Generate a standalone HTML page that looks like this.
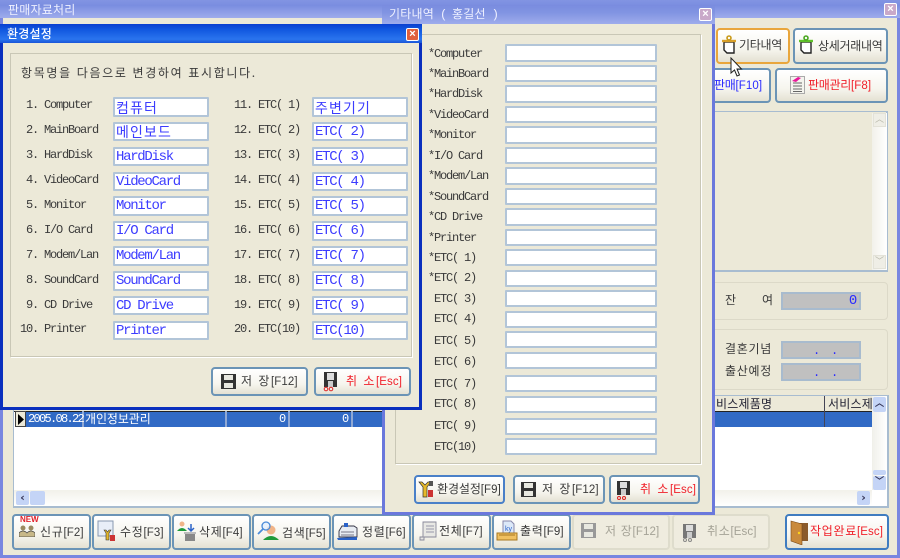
<!DOCTYPE html>
<html lang="ko"><head><meta charset="utf-8"><title>판매자료처리</title>
<style>
html,body{margin:0;padding:0;width:900px;height:558px;overflow:hidden;background:#ece9d8}
#r{position:relative;width:900px;height:558px;overflow:hidden;background:#ece9d8;filter:blur(.35px)}
#r div,#r span,#r svg{position:absolute}
#r i,#r b,#r span span{position:static}
.t{white-space:pre;font:12px/14px "Liberation Mono","DejaVu Sans Mono",monospace;letter-spacing:-1.2px;color:#3a3a3a}
i{font:normal 12px/14px "Noto Sans CJK KR","NanumGothic",sans-serif;letter-spacing:.7px}
b{font:normal 11.5px/14px "Liberation Sans",sans-serif;letter-spacing:.1px}
.b{color:#3c3cff;font-size:14px;letter-spacing:-1.3px}
.b i{font-size:14px;letter-spacing:1.1px}
.f{background:#fff;border:2px solid #b2c5d8;box-sizing:border-box;border-radius:1px}
.g{border:1px solid #c9c7b6;box-shadow:1px 1px 0 #fff;box-sizing:border-box}
.btn{box-sizing:border-box;border:2px solid #6b94b6;border-radius:4px;background:linear-gradient(#fff,#f6f5ee 60%,#e4e1d3)}
.dis{box-sizing:border-box;border:2px solid #dedccc;border-radius:4px;background:#efecdf}
.x{width:13px;height:13px;box-sizing:border-box;border:1px solid #fff;border-radius:2px;color:#fff;font:bold 11px/11px "Liberation Sans",sans-serif;text-align:center}
.w{color:#eef0ff}
.w i{letter-spacing:.2px}
.s{background:#c0c0c0;border:2px solid #a8bbce;box-sizing:border-box;color:#2a2aff}
.k i{letter-spacing:-.3px}
</style></head><body><div id="r">

<!-- main window -->
<div style="left:0;top:0;width:900px;height:558px;box-sizing:border-box;border:3px solid #7886e0;border-top:0"></div>
<div style="left:0;top:0;width:900px;height:18px;background:linear-gradient(#8294e2,#7a8de0 30%,#9eacec)"></div>
<span class="t w" style="left:8px;top:3px"><i>판매자료처리</i></span>
<div class="x" style="left:884px;top:3px;background:#c9a9c9">×</div>

<!-- right buttons -->
<div class="btn" style="left:716px;top:28px;width:74px;height:36px;border-color:#e9a63c"></div>
<svg style="left:721px;top:35px" width="16" height="20" viewBox="0 0 16 20"><path d="M3 7h10v11H6l-3-3z" fill="#fff" stroke="#222" stroke-width="1.4"/><path d="M1 6h14" stroke="#d9a02a" stroke-width="2.4"/><circle cx="8" cy="3" r="2" fill="none" stroke="#c99a1a" stroke-width="1.6"/></svg>
<span class="t k" style="left:739px;top:38px"><i>기타내역</i></span>
<div class="btn" style="left:793px;top:28px;width:95px;height:36px"></div>
<svg style="left:798px;top:35px" width="16" height="20" viewBox="0 0 16 20"><path d="M3 7h10v11H6l-3-3z" fill="#fff" stroke="#222" stroke-width="1.4"/><path d="M1 6h14" stroke="#5fc22a" stroke-width="2.4"/><circle cx="8" cy="3" r="2" fill="none" stroke="#4aa820" stroke-width="1.6"/></svg>
<span class="t k" style="left:818px;top:39px"><i>상세거래내역</i></span>
<div class="btn" style="left:680px;top:68px;width:91px;height:35px"></div>
<span class="t k" style="left:714px;top:78px;color:#2a2aff"><i>판매</i><b>[F10]</b></span>
<div class="btn" style="left:775px;top:68px;width:113px;height:35px"></div>
<svg style="left:790px;top:76px" width="15" height="18" viewBox="0 0 15 18"><rect x=".5" y=".5" width="14" height="17" fill="#f4f4ee" stroke="#aaa"/><path d="M3 7h9M3 10h9M3 13h9M3 15.500h9" stroke="#666"/><path d="M2 5l6-4 3 1-5 4z" fill="#e8189a"/></svg>
<span class="t k" style="left:808px;top:78px;color:#f0202a"><i>판매관리</i><b>[F8]</b></span>

<!-- right panels -->
<div class="g" style="left:700px;top:111px;width:188px;height:161px;border-color:#a8bcd0;border-width:1px 2px 2px 1px;box-shadow:none"></div>
<div style="left:872px;top:113px;width:15px;height:157px;background:linear-gradient(90deg,#f2f1ea,#fff)"></div>
<div style="left:873px;top:113px;width:13px;height:14px;background:#efeee6;border:1px solid #e3e2d8;box-sizing:border-box;color:#b8b8aa;font:9px/12px 'DejaVu Sans';text-align:center">︿</div>
<div style="left:873px;top:255px;width:13px;height:14px;background:#efeee6;border:1px solid #e3e2d8;box-sizing:border-box;color:#b8b8aa;font:9px/12px 'DejaVu Sans';text-align:center">﹀</div>
<div class="g" style="left:700px;top:282px;width:188px;height:38px;border-radius:4px;border-color:#dcd9c8;box-shadow:none"></div>
<div class="g" style="left:700px;top:329px;width:188px;height:61px;border-radius:4px;border-color:#dcd9c8;box-shadow:none"></div>
<span class="t" style="left:725px;top:293px"><i>잔</i></span><span class="t" style="left:762px;top:293px"><i>여</i></span>
<div class="s" style="left:781px;top:292px;width:80px;height:18px"><span class="t b" style="right:3px;top:0;color:#2a2aff">0</span></div>
<span class="t" style="left:725px;top:342px"><i>결혼기념</i></span>
<span class="t" style="left:725px;top:364px"><i>출산예정</i></span>
<div class="s" style="left:781px;top:341px;width:80px;height:18px"><span class="t" style="left:30px;top:1px;color:#2a2aff">.  .</span></div>
<div class="s" style="left:781px;top:363px;width:80px;height:18px"><span class="t" style="left:30px;top:1px;color:#2a2aff">.  .</span></div>

<!-- grid -->
<div style="left:13px;top:395px;width:876px;height:113px;box-sizing:border-box;background:#fff;border:1px solid #a8bcd0;border-width:1px 2px 2px 1px"></div>
<div style="left:14px;top:396px;width:858px;height:15px;background:#ece9d8;border-bottom:1px solid #222"></div>
<div style="left:15px;top:412px;width:857px;height:15px;background:#316ac5"></div>
<div style="left:15px;top:411px;width:11px;height:16px;background:#ece9d8;border:1px solid #444;box-sizing:border-box"></div>
<svg style="left:17px;top:414px" width="8" height="11"><path d="M1 0l6 5.500-6 5.500z" fill="#000"/></svg>
<div style="left:82px;top:411px;width:2px;height:16px;background:#8fa8d4"></div>
<div style="left:225px;top:411px;width:2px;height:16px;background:#8fa8d4"></div>
<div style="left:288px;top:411px;width:2px;height:16px;background:#8fa8d4"></div>
<div style="left:351px;top:411px;width:2px;height:16px;background:#8fa8d4"></div>
<div style="left:824px;top:396px;width:1px;height:31px;background:#445"></div>
<span class="t" style="left:28px;top:412px;color:#fff;letter-spacing:-1.7px">2005.08.22</span>
<span class="t" style="left:85px;top:412px;color:#fff"><i style="letter-spacing:-.1px">개인정보관리</i></span>
<span class="t" style="left:279px;top:412px;color:#fff">0</span>
<span class="t" style="left:342px;top:412px;color:#fff">0</span>
<span class="t" style="left:716px;top:397px;color:#223"><i style="letter-spacing:.2px">비스제품명</i></span>
<span class="t" style="left:828px;top:397px;color:#223"><i style="letter-spacing:.2px">서비스제</i></span>
<div style="left:872px;top:396px;width:15px;height:94px;background:linear-gradient(90deg,#f0f0ea,#fff)"></div>
<div style="left:873px;top:397px;width:13px;height:15px;background:#c4d4f6;border-radius:2px;color:#335;font:bold 9px/14px 'DejaVu Sans';text-align:center">︿</div>
<div style="left:873px;top:470px;width:13px;height:5px;background:#c4d4f6;border-radius:2px"></div>
<div style="left:873px;top:476px;width:13px;height:14px;background:#c4d4f6;border-radius:2px;color:#335;font:bold 9px/12px 'DejaVu Sans';text-align:center">﹀</div>
<div style="left:14px;top:490px;width:858px;height:16px;background:linear-gradient(#f2f1ea,#fff)"></div>
<div style="left:16px;top:491px;width:13px;height:14px;background:#c4d4f6;border-radius:2px;color:#335;font:bold 11px/13px 'DejaVu Sans';text-align:center">‹</div>
<div style="left:30px;top:491px;width:15px;height:14px;background:#c4d4f6;border-radius:2px"></div>
<div style="left:857px;top:491px;width:13px;height:14px;background:#c4d4f6;border-radius:2px;color:#335;font:bold 11px/13px 'DejaVu Sans';text-align:center">›</div>

<!-- bottom buttons -->
<div class="btn" style="left:12px;top:514px;width:79px;height:36px"></div>
<span class="t" style="left:20px;top:515px;color:#e0202a;font:bold 8px/10px 'Liberation Sans',sans-serif;letter-spacing:0">NEW</span>
<svg style="left:19px;top:525px" width="16" height="12"><circle cx="4" cy="3" r="2.500" fill="#9a8a60"/><circle cx="12" cy="3" r="2.500" fill="#9a8a60"/><path d="M0 12V8q4-4 8 0 4-4 8 0v4z" fill="#c8b888" stroke="#444" stroke-width=".7"/></svg>
<span class="t" style="left:40px;top:525px"><i>신규</i><b>[F2]</b></span>
<div class="btn" style="left:92px;top:514px;width:79px;height:36px"></div>
<svg style="left:97px;top:520px" width="20" height="22"><rect x="1" y="1" width="15" height="15" fill="#e8eef8" stroke="#8898b0"/><path d="M7 10l2 3v7h3v-7l2-3-2 0-1.500 2-1.500-2z" fill="#e6b92a" stroke="#333" stroke-width=".6"/><rect x="13" y="15" width="5" height="6" fill="#c33" /></svg>
<span class="t" style="left:120px;top:525px"><i>수정</i><b>[F3]</b></span>
<div class="btn" style="left:172px;top:514px;width:79px;height:36px"></div>
<svg style="left:177px;top:521px" width="20" height="20"><circle cx="5" cy="3" r="2.500" fill="#f0b488"/><path d="M0 10q5-6 10 0z" fill="#1f9a3a"/><path d="M14 3v6m-3-2l3 3 3-3" stroke="#2a62c8" stroke-width="1.500" fill="none"/><rect x="8" y="13" width="10" height="7" fill="#888"/><rect x="7" y="11" width="12" height="2" fill="#bbb"/></svg>
<span class="t" style="left:199px;top:525px"><i>삭제</i><b>[F4]</b></span>
<div class="btn" style="left:252px;top:514px;width:79px;height:36px"></div>
<svg style="left:257px;top:521px" width="22" height="20"><circle cx="14" cy="9" r="4.500" fill="#f0b488"/><path d="M6 19q8-8 16 0z" fill="#1f9a3a"/><circle cx="9" cy="5" r="4" fill="#dfeeff" fill-opacity=".7" stroke="#4a8ad8" stroke-width="1.300"/><path d="M6 8l-5 5" stroke="#4a8ad8" stroke-width="1.800"/></svg>
<span class="t" style="left:282px;top:526px"><i>검색</i><b>[F5]</b></span>
<div class="btn" style="left:332px;top:514px;width:79px;height:36px"></div>
<svg style="left:337px;top:523px" width="21" height="18"><path d="M5 3h12l3 2v9H2V8z" fill="#e8ecf2" stroke="#334" stroke-width=".9"/><rect x="7" y="0" width="4" height="4" fill="#2a62c8"/><path d="M4 9h13M4 12h13" stroke="#778"/><path d="M0 15l20-1v3H1z" fill="#2a62c8"/></svg>
<span class="t" style="left:362px;top:525px"><i>정렬</i><b>[F6]</b></span>
<div class="btn" style="left:412px;top:514px;width:79px;height:36px"></div>
<svg style="left:419px;top:521px" width="18" height="20"><path d="M4 1h13v15H5v3H1v-3h3z" fill="#e8e8e4" stroke="#889" stroke-width=".9"/><path d="M7 5h8M7 8h8M7 11h8" stroke="#99a"/></svg>
<span class="t" style="left:439px;top:524px"><i>전체</i><b>[F7]</b></span>
<div class="btn" style="left:492px;top:514px;width:79px;height:36px"></div>
<svg style="left:496px;top:520px" width="22" height="22"><path d="M7 1h8l3 3v10H7z" fill="#dce8f8" stroke="#88a"/><text x="9" y="11" font-size="7" font-family="Liberation Sans" fill="#2a62c8">ky</text><path d="M1 13h20v7H1z" fill="#f0c060" stroke="#a87820"/><path d="M3 15h16" stroke="#a87820"/></svg>
<span class="t" style="left:520px;top:524px"><i>출력</i><b>[F9]</b></span>
<div class="dis" style="left:572px;top:514px;width:98px;height:36px"></div>
<svg style="left:581px;top:523px" width="15" height="15"><path d="M0 0h15v15H0z" fill="#999"/><rect x="3" y="1" width="9" height="5" fill="#e8e8e0"/><rect x="3" y="9" width="9" height="5" fill="#e8e8e0"/></svg>
<span class="t" style="left:605px;top:524px;color:#a4a296"><i>저 장</i><b>[F12]</b></span>
<div class="dis" style="left:672px;top:514px;width:98px;height:36px"></div>
<svg style="left:682px;top:522px" width="15" height="20"><path d="M1 2h13v14H1z" fill="#777"/><rect x="4" y="3" width="7" height="6" fill="#ddd"/><rect x="5" y="10" width="5" height="6" fill="#ccc"/><circle cx="3" cy="18" r="1.500" fill="none" stroke="#888"/><circle cx="8" cy="18" r="1.500" fill="none" stroke="#888"/></svg>
<span class="t" style="left:707px;top:524px;color:#a4a296"><i>취소</i><b>[Esc]</b></span>
<div class="btn" style="left:785px;top:514px;width:104px;height:36px;border-color:#3f7cc0;border-width:2px"></div>
<svg style="left:790px;top:520px" width="18" height="25"><path d="M4 3h14v18H4z" fill="#8a5a2a"/><path d="M1 1l11 3v21L1 21z" fill="#c98a3c" stroke="#7a4a18" stroke-width=".6"/><circle cx="9" cy="13" r="1.200" fill="#ffd21a"/></svg>
<span class="t" style="left:810px;top:524px;color:#f0202a"><i>작업완료</i><b>[Esc]</b></span>

<!-- etc dialog -->
<div style="left:382px;top:5px;width:333px;height:510px;box-sizing:border-box;background:#ece9d8;border:3px solid #6a78dc;border-top:0"></div>
<div style="left:382px;top:5px;width:333px;height:19px;background:linear-gradient(#7a8cdf,#8194e2 40%,#9eacec)"></div>
<span class="t w" style="left:389px;top:7px;letter-spacing:-1.2px"><i>기타내역</i> ( <i>홍길선</i> )</span>
<div class="x" style="left:699px;top:8px;background:#c9a9c9">×</div>
<div class="g" style="left:395px;top:34px;width:306px;height:430px"></div>

<span class="t" style="left:428px;top:47px">*Computer</span><div class="f" style="left:505px;top:44px;width:152px;height:18px"></div>
<span class="t" style="left:428px;top:67px">*MainBoard</span><div class="f" style="left:505px;top:65px;width:152px;height:17px"></div>
<span class="t" style="left:428px;top:87px">*HardDisk</span><div class="f" style="left:505px;top:85px;width:152px;height:18px"></div>
<span class="t" style="left:428px;top:108px">*VideoCard</span><div class="f" style="left:505px;top:106px;width:152px;height:17px"></div>
<span class="t" style="left:428px;top:128px">*Monitor</span><div class="f" style="left:505px;top:126px;width:152px;height:18px"></div>
<span class="t" style="left:428px;top:149px">*I/O Card</span><div class="f" style="left:505px;top:147px;width:152px;height:17px"></div>
<span class="t" style="left:428px;top:169px">*Modem/Lan</span><div class="f" style="left:505px;top:167px;width:152px;height:18px"></div>
<span class="t" style="left:428px;top:190px">*SoundCard</span><div class="f" style="left:505px;top:188px;width:152px;height:17px"></div>
<span class="t" style="left:428px;top:210px">*CD Drive</span><div class="f" style="left:505px;top:208px;width:152px;height:18px"></div>
<span class="t" style="left:428px;top:231px">*Printer</span><div class="f" style="left:505px;top:229px;width:152px;height:17px"></div>
<span class="t" style="left:428px;top:251px">*ETC( 1)</span><div class="f" style="left:505px;top:249px;width:152px;height:17px"></div>
<span class="t" style="left:428px;top:271px">*ETC( 2)</span><div class="f" style="left:505px;top:270px;width:152px;height:17px"></div>
<span class="t" style="left:434px;top:292px">ETC( 3)</span><div class="f" style="left:505px;top:290px;width:152px;height:17px"></div>
<span class="t" style="left:434px;top:312px">ETC( 4)</span><div class="f" style="left:505px;top:311px;width:152px;height:17px"></div>
<span class="t" style="left:434px;top:334px">ETC( 5)</span><div class="f" style="left:505px;top:331px;width:152px;height:17px"></div>
<span class="t" style="left:434px;top:355px">ETC( 6)</span><div class="f" style="left:505px;top:352px;width:152px;height:17px"></div>
<span class="t" style="left:434px;top:377px">ETC( 7)</span><div class="f" style="left:505px;top:375px;width:152px;height:17px"></div>
<span class="t" style="left:434px;top:397px">ETC( 8)</span><div class="f" style="left:505px;top:396px;width:152px;height:17px"></div>
<span class="t" style="left:434px;top:419px">ETC( 9)</span><div class="f" style="left:505px;top:418px;width:152px;height:17px"></div>
<span class="t" style="left:434px;top:440px">ETC(10)</span><div class="f" style="left:505px;top:438px;width:152px;height:17px"></div>

<div class="btn" style="left:414px;top:475px;width:91px;height:29px;border-color:#4a80c8"></div>
<svg style="left:418px;top:481px" width="16" height="17"><path d="M1 1l4 5v10h4V6l4-5-3 0-3 3-3-3z" fill="#e6b92a" stroke="#333" stroke-width=".7"/><path d="M11 0h4v5h-4z" fill="#555"/><rect x="10" y="9" width="5" height="7" fill="#c33"/></svg>
<span class="t" style="left:437px;top:482px"><i style="letter-spacing:-.1px">환경설정</i><b>[F9]</b></span>
<div class="btn" style="left:513px;top:475px;width:92px;height:29px"></div>
<svg style="left:521px;top:482px" width="15" height="15"><path d="M0 0h15v15H0z" fill="#333"/><rect x="3" y="1" width="9" height="5" fill="#e8e8e0"/><rect x="3" y="9" width="9" height="5" fill="#e8e8e0"/></svg>
<span class="t" style="left:542px;top:482px"><i style="letter-spacing:1.5px">저 장</i><b>[F12]</b></span>
<div class="btn" style="left:609px;top:475px;width:91px;height:29px"></div>
<svg style="left:616px;top:480px" width="15" height="20"><path d="M1 1h13v14H1z" fill="#333"/><rect x="4" y="2" width="7" height="6" fill="#ddd"/><rect x="5" y="9" width="5" height="6" fill="#ccc"/><circle cx="3" cy="18" r="1.500" fill="none" stroke="#d22"/><circle cx="8" cy="18" r="1.500" fill="none" stroke="#d22"/></svg>
<span class="t" style="left:640px;top:482px;color:#f0202a"><i style="letter-spacing:1.5px">취 소</i><b>[Esc]</b></span>

<!-- env dialog -->
<div style="left:0;top:24px;width:422px;height:386px;box-sizing:border-box;background:#ece9d8;border:3px solid #0a2fbe;border-top:0"></div>
<div style="left:0;top:24px;width:422px;height:19px;background:linear-gradient(#0a3fd0,#1158e0 30%,#2a74ee 80%,#1a55d8)"></div>
<span class="t" style="left:7px;top:27px;color:#fff"><i style="font-weight:500;letter-spacing:.2px">환경설정</i></span>
<div class="x" style="left:406px;top:28px;background:#e0603c">×</div>
<div class="g" style="left:10px;top:53px;width:402px;height:304px"></div>
<span class="t" style="left:21px;top:66px"><i style="letter-spacing:1.65px">항목명을 다음으로 변경하여 표시합니다.</i></span>

<span class="t" style="left:26px;top:98px">1. Computer</span><div class="f" style="left:113px;top:97px;width:96px;height:20px"><span class="t b" style="left:1px;top:2px"><i>컴퓨터</i></span></div>
<span class="t" style="left:26px;top:123px">2. MainBoard</span><div class="f" style="left:113px;top:122px;width:96px;height:19px"><span class="t b" style="left:1px;top:1px"><i>메인보드</i></span></div>
<span class="t" style="left:26px;top:148px">3. HardDisk</span><div class="f" style="left:113px;top:147px;width:96px;height:19px"><span class="t b" style="left:1px;top:1px">HardDisk</span></div>
<span class="t" style="left:26px;top:173px">4. VideoCard</span><div class="f" style="left:113px;top:172px;width:96px;height:19px"><span class="t b" style="left:1px;top:1px">VideoCard</span></div>
<span class="t" style="left:26px;top:198px">5. Monitor</span><div class="f" style="left:113px;top:196px;width:96px;height:20px"><span class="t b" style="left:1px;top:1px">Monitor</span></div>
<span class="t" style="left:26px;top:223px">6. I/O Card</span><div class="f" style="left:113px;top:221px;width:96px;height:20px"><span class="t b" style="left:1px;top:1px">I/O Card</span></div>
<span class="t" style="left:26px;top:248px">7. Modem/Lan</span><div class="f" style="left:113px;top:246px;width:96px;height:20px"><span class="t b" style="left:1px;top:1px">Modem/Lan</span></div>
<span class="t" style="left:26px;top:273px">8. SoundCard</span><div class="f" style="left:113px;top:271px;width:96px;height:20px"><span class="t b" style="left:1px;top:1px">SoundCard</span></div>
<span class="t" style="left:26px;top:298px">9. CD Drive</span><div class="f" style="left:113px;top:296px;width:96px;height:19px"><span class="t b" style="left:1px;top:1px">CD Drive</span></div>
<span class="t" style="left:20px;top:322px">10. Printer</span><div class="f" style="left:113px;top:321px;width:96px;height:19px"><span class="t b" style="left:1px;top:1px">Printer</span></div>

<span class="t" style="left:234px;top:98px">11. ETC( 1)</span><div class="f" style="left:312px;top:97px;width:96px;height:20px"><span class="t b" style="left:1px;top:2px"><i>주변기기</i></span></div>
<span class="t" style="left:234px;top:123px">12. ETC( 2)</span><div class="f" style="left:312px;top:122px;width:96px;height:19px"><span class="t b" style="left:1px;top:1px">ETC( 2)</span></div>
<span class="t" style="left:234px;top:148px">13. ETC( 3)</span><div class="f" style="left:312px;top:147px;width:96px;height:19px"><span class="t b" style="left:1px;top:1px">ETC( 3)</span></div>
<span class="t" style="left:234px;top:173px">14. ETC( 4)</span><div class="f" style="left:312px;top:172px;width:96px;height:19px"><span class="t b" style="left:1px;top:1px">ETC( 4)</span></div>
<span class="t" style="left:234px;top:198px">15. ETC( 5)</span><div class="f" style="left:312px;top:196px;width:96px;height:20px"><span class="t b" style="left:1px;top:1px">ETC( 5)</span></div>
<span class="t" style="left:234px;top:223px">16. ETC( 6)</span><div class="f" style="left:312px;top:221px;width:96px;height:20px"><span class="t b" style="left:1px;top:1px">ETC( 6)</span></div>
<span class="t" style="left:234px;top:248px">17. ETC( 7)</span><div class="f" style="left:312px;top:246px;width:96px;height:20px"><span class="t b" style="left:1px;top:1px">ETC( 7)</span></div>
<span class="t" style="left:234px;top:273px">18. ETC( 8)</span><div class="f" style="left:312px;top:271px;width:96px;height:20px"><span class="t b" style="left:1px;top:1px">ETC( 8)</span></div>
<span class="t" style="left:234px;top:298px">19. ETC( 9)</span><div class="f" style="left:312px;top:296px;width:96px;height:19px"><span class="t b" style="left:1px;top:1px">ETC( 9)</span></div>
<span class="t" style="left:234px;top:322px">20. ETC(10)</span><div class="f" style="left:312px;top:321px;width:96px;height:19px"><span class="t b" style="left:1px;top:1px">ETC(10)</span></div>

<div class="btn" style="left:211px;top:367px;width:97px;height:29px"></div>
<svg style="left:221px;top:374px" width="15" height="15"><path d="M0 0h15v15H0z" fill="#333"/><rect x="3" y="1" width="9" height="5" fill="#e8e8e0"/><rect x="3" y="9" width="9" height="5" fill="#e8e8e0"/></svg>
<span class="t" style="left:241px;top:374px"><i style="letter-spacing:1.5px">저 장</i><b>[F12]</b></span>
<div class="btn" style="left:314px;top:367px;width:97px;height:29px"></div>
<svg style="left:323px;top:371px" width="15" height="21"><path d="M1 1h13v15H1z" fill="#333"/><rect x="4" y="2" width="7" height="7" fill="#ddd"/><rect x="5" y="10" width="5" height="6" fill="#ccc"/><circle cx="3" cy="18" r="1.800" fill="none" stroke="#d22"/><circle cx="8" cy="18" r="1.800" fill="none" stroke="#d22"/></svg>
<span class="t" style="left:346px;top:374px;color:#f0202a"><i style="letter-spacing:1.5px">취 소</i><b>[Esc]</b></span>

<!-- cursor -->
<svg style="left:730px;top:57px" width="14" height="21"><path d="M1 1v15l3.500-3 2.500 6 2.500-1-2.500-6h4.500z" fill="#fff" stroke="#222" stroke-width="1"/></svg>
</div></body></html>
